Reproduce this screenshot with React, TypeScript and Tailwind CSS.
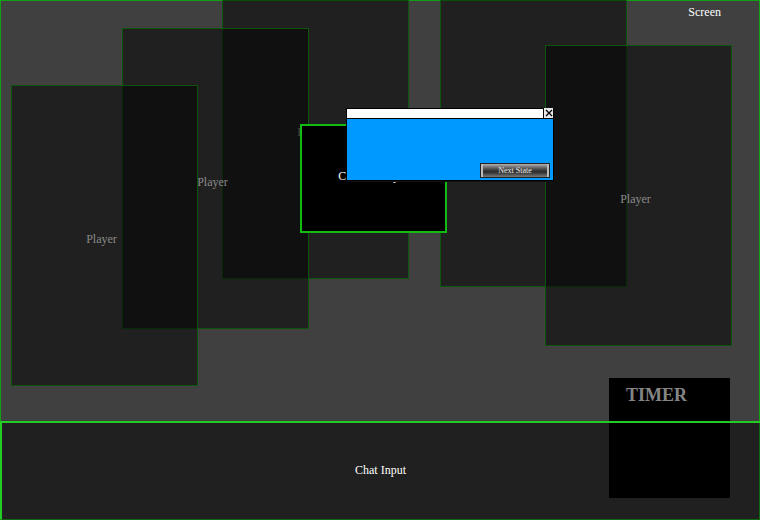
import React from "react";

const players = [
  { left: 440, top: -14, key: "p4" },
  { left: 222, top: -22, key: "p3" },
  { left: 122, top: 28, key: "p2" },
  { left: 11, top: 85, key: "p1" },
  { left: 545, top: 45, key: "p5" },
];

function Player({ left, top }: { left: number; top: number }) {
  return (
    <div
      className="absolute w-[187px] h-[301px] bg-black/50 border border-[#0c560c] flex items-center justify-center pr-[6px] pt-[6px]"
      style={{ left, top }}
    >
      <span className="text-[12px] text-[#8a8a8a]">Player</span>
    </div>
  );
}

export default function App() {
  return (
    <div
      className="relative w-[760px] h-[520px] overflow-hidden bg-[#404040]"
      style={{ fontFamily: '"Liberation Serif", serif' }}
    >
      {/* screen frame */}
      <div className="absolute left-0 top-0 w-[760px] h-[421px] border border-b-0 border-[#11a011] pointer-events-none" />
      <div className="absolute right-[39px] top-[6px] text-[12px] leading-none text-white">Screen</div>

      {players.slice(0, 4).map((p) => (
        <Player key={p.key} left={p.left} top={p.top} />
      ))}

      {/* camera box */}
      <div className="absolute left-[300px] top-[124px] w-[147px] h-[109px] bg-black border-2 border-[#11bb11] flex items-center justify-center">
        <span className="text-[12px] leading-none text-white -mt-[5px]">Current Player</span>
      </div>

      <Player left={players[4].left} top={players[4].top} />

      {/* dialog */}
      <div className="absolute left-[346px] top-[108px] w-[208px] h-[73px] border border-black bg-[#0099ff] shadow-[1px_1px_0_#111] flex flex-col">
        <div className="h-[10px] bg-white border-b border-black flex justify-end">
          <div className="w-[10px] h-[10px] bg-[#e8e8e8] border-l border-black flex items-center justify-center -mt-[1px]">
            <svg width="8" height="8" viewBox="0 0 8 8">
              <path d="M1 1 L7 7 M7 1 L1 7" stroke="#000" strokeWidth="1.3" />
            </svg>
          </div>
        </div>
        <div className="flex-1 flex items-end justify-end pr-[3px] pb-[2px]">
          <div className="w-[70px] h-[15px] border border-[#222] bg-[linear-gradient(#b0b0b0,#4a4a4a_40%,#2a2a2a_60%,#7a7a7a)] flex items-center justify-center shadow-[inset_2px_0_0_#bbb,inset_-2px_0_0_#bbb]">
            <span className="text-[8px] leading-none text-[#e8e8e8]">Next State</span>
          </div>
        </div>
      </div>

      {/* timer */}
      <div className="absolute left-[609px] top-[378px] w-[121px] h-[120px] bg-black">
        <div className="pl-[17px] pt-[8px] text-[18px] font-bold text-[#858585] leading-none">TIMER</div>
      </div>

      {/* chat input */}
      <div className="absolute z-10 left-0 top-[421px] w-[760px] h-[99px] flex flex-col bg-black/50">
        <div className="h-[2px] shrink-0 bg-[rgb(34,204,34)]" />
        <div className="flex-1 border-l-2 border-b border-r border-l-[rgb(34,204,34)] border-b-[#116611] border-r-[#116611] flex items-center justify-center pb-[2px]">
          <span className="text-[12px] text-white">Chat Input</span>
        </div>
      </div>
    </div>
  );
}
